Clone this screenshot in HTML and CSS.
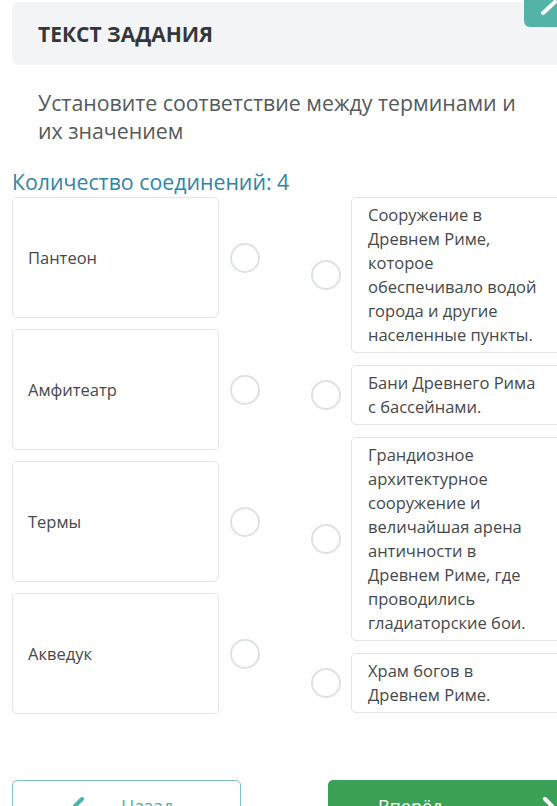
FILE: index.html
```html
<!DOCTYPE html>
<html lang="ru">
<head>
<meta charset="utf-8">
<title>Текст задания</title>
<link rel="stylesheet" href="styles.css">
</head>
<body>
<div class="page">
  <div class="corner-btn">
    <svg width="33" height="27" viewBox="0 0 33 27"><path d="M19 13 L31 2" stroke="#fff" stroke-width="4" stroke-linecap="round"/></svg>
  </div>
  <div class="task-head">ТЕКСТ ЗАДАНИЯ</div>
  <p class="instruction">Установите соответствие между терминами и их значением</p>
  <div class="count">Количество соединений: 4</div>
  <div class="match">
    <div class="col-left">
      <div class="row-left"><div class="card term">Пантеон</div><span class="dot"></span></div>
      <div class="row-left"><div class="card term">Амфитеатр</div><span class="dot"></span></div>
      <div class="row-left"><div class="card term">Термы</div><span class="dot"></span></div>
      <div class="row-left"><div class="card term">Акведук</div><span class="dot"></span></div>
    </div>
    <div class="col-right">
      <div class="row-right"><span class="dot"></span><div class="card def">Сооружение в Древнем Риме, которое обеспечивало водой города и другие населенные пункты.</div></div>
      <div class="row-right"><span class="dot"></span><div class="card def">Бани Древнего Рима с бассейнами.</div></div>
      <div class="row-right"><span class="dot"></span><div class="card def">Грандиозное архитектурное сооружение и величайшая арена античности в Древнем Риме, где проводились гладиаторские бои.</div></div>
      <div class="row-right"><span class="dot"></span><div class="card def">Храм богов в Древнем Риме.</div></div>
    </div>
  </div>
  <div class="nav">
    <div class="btn btn-back">
      <svg class="arr" width="14" height="18" viewBox="0 0 14 18"><path d="M11 2 L4 9 L11 16" stroke="#4fb0ae" stroke-width="4" fill="none" stroke-linecap="round" stroke-linejoin="round"/></svg>
      <span>Назад</span>
    </div>
    <div class="btn btn-next">
      <span>Вперёд</span>
      <svg class="arr" width="14" height="18" viewBox="0 0 14 18"><path d="M3 2 L10 9 L3 16" stroke="#fff" stroke-width="4" fill="none" stroke-linecap="round" stroke-linejoin="round"/></svg>
    </div>
  </div>
</div>
</body>
</html>
```
FILE: styles.css
```css
html, body {
  margin: 0;
  padding: 0;
  background: #ffffff;
  overflow: hidden;
  width: 557px;
  height: 806px;
}
body {
  font-family: "Open Sans", "Noto Sans", sans-serif;
}
.page {
  position: relative;
  padding: 2px 0 0 12px;
}
.corner-btn {
  position: absolute;
  top: 0;
  left: 524px;
  width: 40px;
  height: 27px;
  background: #52b3a6;
  border-bottom-left-radius: 6px;
}
.task-head {
  height: 63px;
  margin-right: -10px;
  background: #f3f4f6;
  border-radius: 6px;
  box-sizing: border-box;
  padding-left: 26px;
  display: flex;
  align-items: center;
  font-weight: 700;
  font-size: 21px;
  color: #33373b;
}
.instruction {
  margin: 24px 0 0 0;
  padding-left: 26px;
  padding-right: 30px;
  font-size: 21.3px;
  line-height: 28px;
  color: #555a5d;
}
.count {
  margin-top: 23px;
  font-size: 21.3px;
  line-height: 28px;
  color: #2f85a7;
}
.match {
  margin-top: 1px;
  display: flex;
  gap: 51px;
}
.col-left, .col-right {
  display: flex;
  flex-direction: column;
  gap: 11px;
  flex-shrink: 0;
}
.col-right { gap: 12px; }
.row-left, .row-right {
  display: flex;
  align-items: center;
}
.card {
  border: 1px solid #e2e6e6;
  border-radius: 5px;
  box-sizing: border-box;
  font-size: 16.5px;
  line-height: 24px;
  color: #45494c;
  background: #fff;
}
.term {
  width: 207px;
  height: 121px;
  padding-left: 15px;
  display: flex;
  align-items: center;
}
.def {
  width: 213px;
  padding: 5px 16px 5px 16px;
  margin-left: 10px;
}
.dot {
  width: 30px;
  height: 30px;
  box-sizing: border-box;
  border: 2px solid #dde2e2;
  border-radius: 50%;
  flex-shrink: 0;
}
.row-left .dot { margin-left: 11px; }
.nav {
  margin-top: 66px;
  display: flex;
  gap: 87px;
}
.btn {
  height: 52px;
  box-sizing: border-box;
  border-radius: 5px;
  display: flex;
  align-items: center;
  font-size: 18px;
  flex-shrink: 0;
}
.btn-back {
  width: 229px;
  border: 1.5px solid #7fc2c2;
  color: #4fb0ae;
  padding-left: 58px;
  gap: 36px;
}
.btn-next {
  width: 240px;
  background: #3ba055;
  color: #fff;
  padding-left: 50px;
  gap: 100px;
}
```
